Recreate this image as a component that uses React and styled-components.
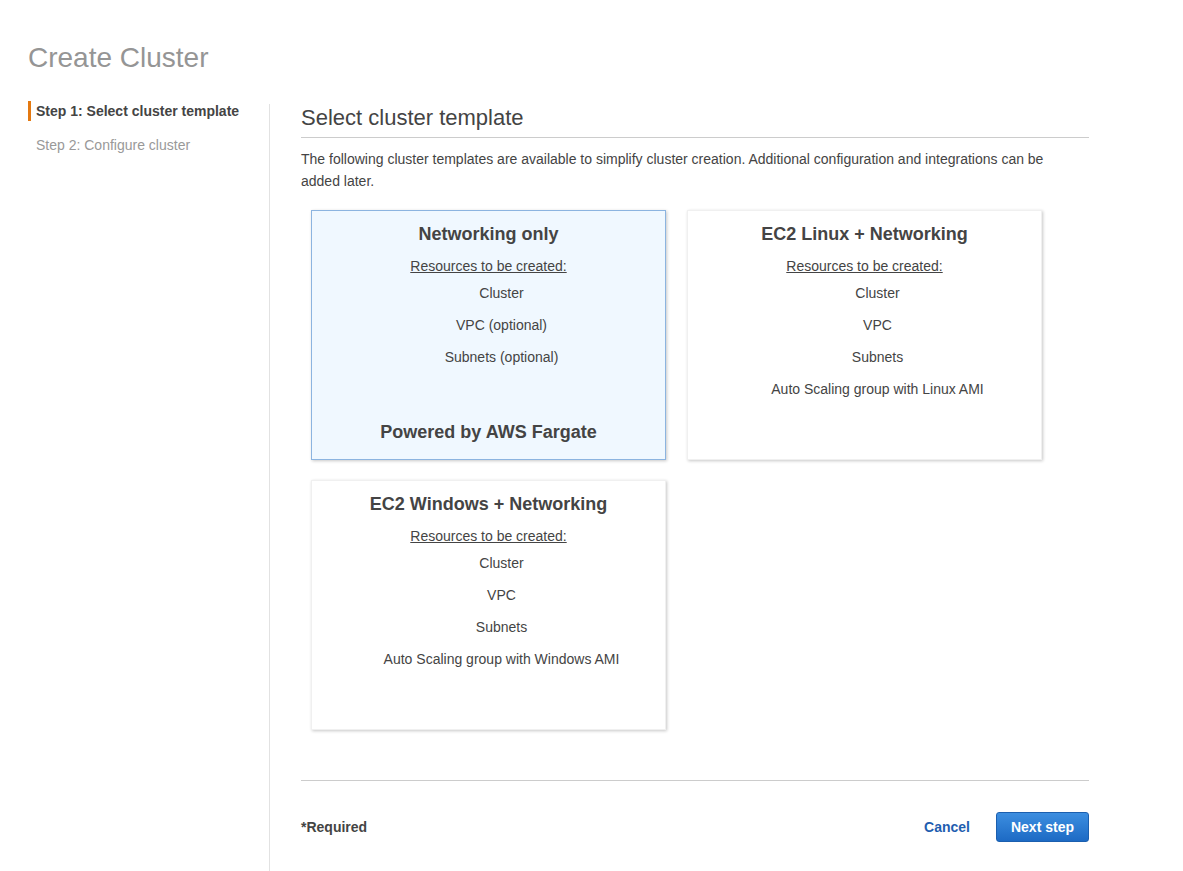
import React from 'react';
import styled, {createGlobalStyle} from 'styled-components';

const GlobalStyle = createGlobalStyle`
  * { box-sizing: border-box; }
  body {
    margin: 0;
    background: #fff;
    font-family: "Liberation Sans", Arial, Helvetica, sans-serif;
    color: #444;
  }
`;

const templates = [
  {
    title: 'Networking only',
    items: ['Cluster', 'VPC (optional)', 'Subnets (optional)'],
    footer: 'Powered by AWS Fargate',
    selected: true,
  },
  {
    title: 'EC2 Linux + Networking',
    items: ['Cluster', 'VPC', 'Subnets', 'Auto Scaling group with Linux AMI'],
  },
  {
    title: 'EC2 Windows + Networking',
    items: ['Cluster', 'VPC', 'Subnets', 'Auto Scaling group with Windows AMI'],
  },
];

function App() {
  return (
    <>
      <GlobalStyle />
      <Page>
        <PageTitle>Create Cluster</PageTitle>
        <Columns>
          <Sidebar>
            <Step active>Step 1: Select cluster template</Step>
            <Step>Step 2: Configure cluster</Step>
          </Sidebar>
          <Content>
            <SectionTitle>Select cluster template</SectionTitle>
            <Description>
              The following cluster templates are available to simplify cluster creation. Additional
              configuration and integrations can be added later.
            </Description>
            <CardGrid>
              {templates.map((t) => (
                <Card key={t.title} selected={t.selected}>
                  <CardTitle>{t.title}</CardTitle>
                  <ResourcesLabel>Resources to be created:</ResourcesLabel>
                  <ResourceList>
                    {t.items.map((item) => (
                      <li key={item}>{item}</li>
                    ))}
                  </ResourceList>
                  {t.footer && <CardFooter>{t.footer}</CardFooter>}
                </Card>
              ))}
            </CardGrid>
            <Footer>
              <Required>*Required</Required>
              <Actions>
                <CancelLink href="#">Cancel</CancelLink>
                <PrimaryButton>Next step</PrimaryButton>
              </Actions>
            </Footer>
          </Content>
        </Columns>
      </Page>
    </>
  );
}

const Page = styled.div`
  padding: 41px 0 0 28px;
  min-height: 871px;
  display: flex;
  flex-direction: column;
`;

const PageTitle = styled.h1`
  margin: 0;
  font-size: 28px;
  line-height: 34px;
  font-weight: normal;
  color: #959595;
`;

const Columns = styled.div`
  margin-top: 26px;
  display: flex;
  flex: 1;
`;

const Sidebar = styled.ul`
  list-style: none;
  margin: 3px 0 0;
  padding: 0;
  width: 242px;
  border-right: 1px solid #e2e2e2;
  display: flex;
  flex-direction: column;
  gap: 14px;
  & > li:first-child {
    margin-top: -3px;
  }
`;

const Step = styled.li`
  font-size: 14px;
  line-height: 20px;
  padding-left: 5px;
  border-left: 3px solid ${(p) => (p.active ? '#e47911' : 'transparent')};
  font-weight: ${(p) => (p.active ? 'bold' : 'normal')};
  color: ${(p) => (p.active ? '#444' : '#999')};
`;

const Content = styled.div`
  width: 819px;
  padding: 3px 0 0 31px;
  display: flex;
  flex-direction: column;
`;

const SectionTitle = styled.h2`
  margin: 0;
  font-size: 22px;
  line-height: 28px;
  font-weight: normal;
  color: #444;
  padding-bottom: 5px;
  border-bottom: 1px solid #ccc;
`;

const Description = styled.p`
  margin: 10px 0 0;
  max-width: 770px;
  font-size: 14px;
  line-height: 22px;
  color: #444;
`;

const CardGrid = styled.div`
  margin: 18px 0 0 10px;
  display: grid;
  grid-template-columns: 355px 355px;
  column-gap: 21px;
  row-gap: 20px;
`;

const Card = styled.div`
  height: 250px;
  padding: 11px 10px 15px;
  display: flex;
  flex-direction: column;
  align-items: center;
  text-align: center;
  background: ${(p) => (p.selected ? '#f0f8ff' : '#fff')};
  border: 1px solid ${(p) => (p.selected ? '#8cb4e0' : '#f0f0f0')};
  box-shadow: 1px 1px 3px rgba(0, 0, 0, 0.22);
`;

const CardTitle = styled.h3`
  margin: 0;
  font-size: 18px;
  line-height: 24px;
  font-weight: bold;
  color: #444;
`;

const ResourcesLabel = styled.div`
  margin-top: 10px;
  font-size: 14px;
  line-height: 20px;
  text-decoration: underline;
  color: #444;
`;

const ResourceList = styled.ul`
  list-style: none;
  margin: 7px 0 0;
  padding: 0 0 0 26px;
  display: flex;
  flex-direction: column;
  gap: 12px;
  font-size: 14px;
  line-height: 20px;
  color: #444;
`;

const CardFooter = styled.div`
  margin-top: auto;
  font-size: 18px;
  line-height: 24px;
  font-weight: bold;
  color: #444;
`;

const Footer = styled.div`
  margin-top: 50px;
  border-top: 1px solid #ccc;
  padding-top: 31px;
  display: flex;
  align-items: center;
  justify-content: space-between;
`;

const Required = styled.span`
  font-size: 14px;
  font-weight: bold;
  color: #444;
`;

const Actions = styled.div`
  display: flex;
  align-items: center;
  gap: 26px;
`;

const CancelLink = styled.a`
  font-size: 14px;
  font-weight: bold;
  color: #1f5eb0;
  text-decoration: none;
`;

const PrimaryButton = styled.button`
  height: 30px;
  padding: 0 14px;
  font-family: inherit;
  font-size: 14px;
  font-weight: bold;
  color: #fff;
  background: linear-gradient(#3c8ee0, #1d6ac4);
  border: 1px solid #1b5faf;
  border-radius: 3px;
  cursor: pointer;
`;

export default App;
